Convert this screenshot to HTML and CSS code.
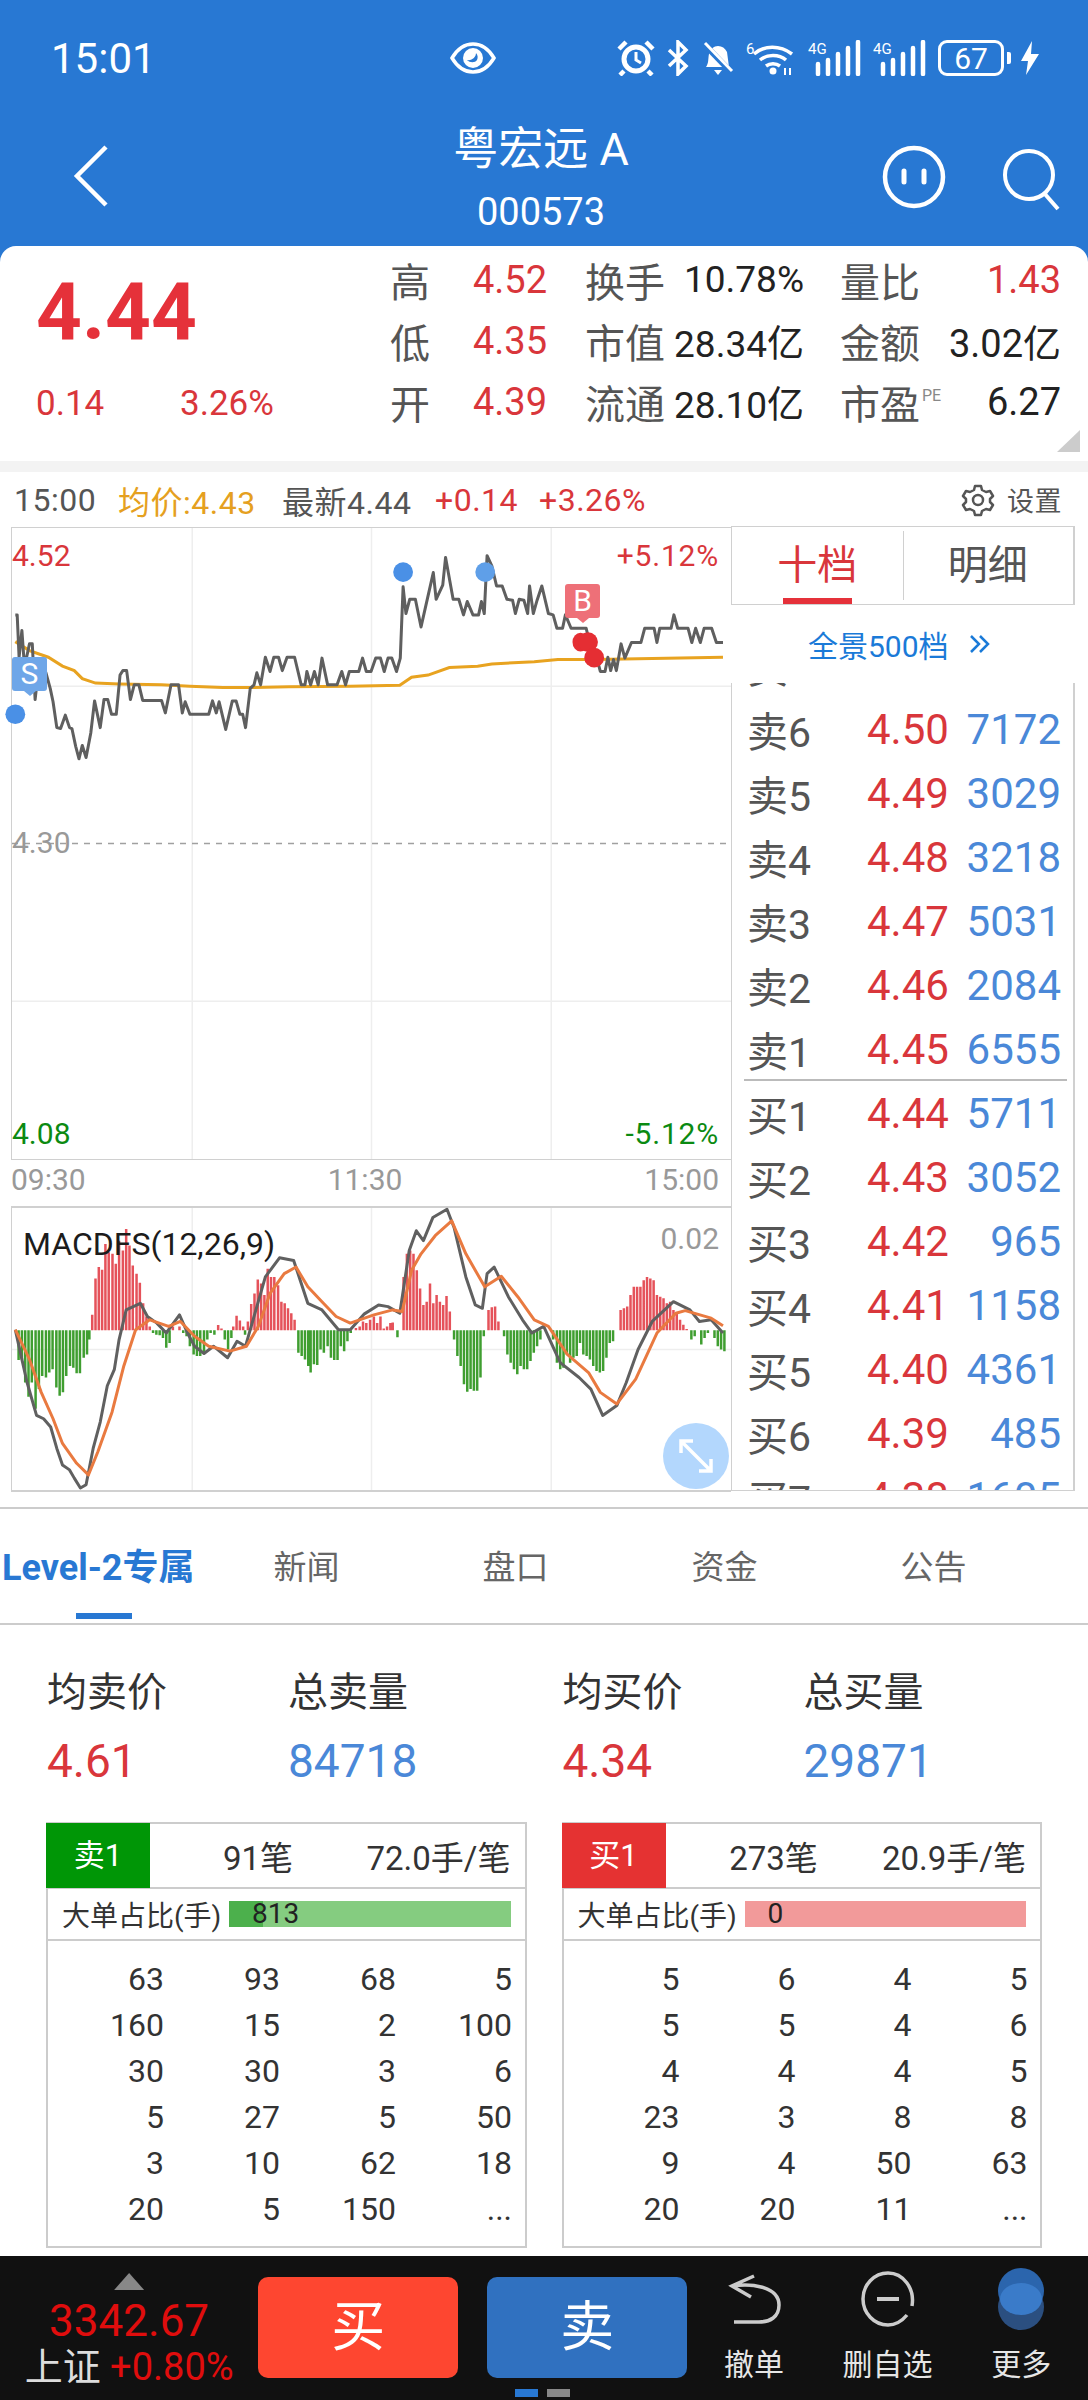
FILE: index.html
```html
<!DOCTYPE html>
<html>
<head>
    <title>粤宏远A</title>
    <link rel="stylesheet" href="styles.css">
</head>
<body>
    <div class="header">
        <div class="status-bar">
            <div class="status-time">15:01</div>
            <svg class="status-eye" width="46" height="32" viewBox="0 0 46 32">
                <path d="M2 16C8 6 15 2 23 2s15 4 21 14c-6 10-13 14-21 14S8 26 2 16z" fill="none" stroke="#fff" stroke-width="3.5"/>
                <circle cx="23" cy="16" r="10" fill="#fff"/>
                <path d="M17 18c3 3 8 3 10 0 1-2 1-5-1-7 0 4-4 8-9 7z" fill="#2878d3"/>
            </svg>
            <div class="status-icons">
                <svg width="38" height="36" viewBox="0 0 38 36">
                    <circle cx="19" cy="19" r="12" fill="none" stroke="#fff" stroke-width="5"/>
                    <path d="M19 12v8l5 3" fill="none" stroke="#fff" stroke-width="3"/>
                    <path d="M2 9l7-7M36 9l-7-7M7 31l-4 4M31 31l4 4" stroke="#fff" stroke-width="4.5"/>
                </svg>
                <svg width="22" height="36" viewBox="0 0 22 36">
                    <path d="M2 10l17 16-8 8V2l8 8L2 26" fill="none" stroke="#fff" stroke-width="3.5"/>
                </svg>
                <svg width="33" height="36" viewBox="0 0 33 36">
                    <path d="M5 27c3-4 2-9 3-13 1-5 5-8 9-8s7 2 9 6l2 15z" fill="#fff"/>
                    <path d="M3 4l27 28" stroke="#2878d3" stroke-width="6"/>
                    <path d="M4 3l27 28" stroke="#fff" stroke-width="3"/>
                    <path d="M13 30h8l-4 5z" fill="#fff"/>
                </svg>
                <svg width="50" height="36" viewBox="0 0 50 36">
                    <text x="0" y="14" class="status-mini">6</text>
                    <path d="M8 14c10-9 26-9 38 0M14 20c7-6 19-6 26 0M20 26c4-3 10-3 14 0" fill="none" stroke="#fff" stroke-width="3.5"/>
                    <circle cx="27" cy="31" r="3.5" fill="#fff"/>
                    <path d="M39 28v7M44 35v-7" stroke="#fff" stroke-width="2"/>
                </svg>
                <svg width="53" height="36" viewBox="0 0 53 36">
                    <text x="0" y="14" class="status-mini">4G</text>
                    <path d="M10 24v10M20 20v14M30 14v20M40 8v26M50 2v32" stroke="#fff" stroke-width="4.5" stroke-linecap="round"/>
                </svg>
                <svg width="53" height="36" viewBox="0 0 53 36">
                    <text x="0" y="14" class="status-mini">4G</text>
                    <path d="M10 24v10M20 20v14M30 14v20M40 8v26M50 2v32" stroke="#fff" stroke-width="4.5" stroke-linecap="round"/>
                </svg>
                <div class="battery">67</div>
                <div class="battery-nub"></div>
                <svg class="status-bolt" width="18" height="34" viewBox="0 0 18 34">
                    <path d="M11 0L0 20h7L5 34l13-21h-8z" fill="#fff"/>
                </svg>
            </div>
        </div>
        <div class="nav">
            <svg class="nav-back" width="40" height="64" viewBox="0 0 40 64">
                <path d="M35 3L6 32l29 29" fill="none" stroke="#fff" stroke-width="4.5"/>
            </svg>
            <div class="nav-title">
                <div class="nav-name">粤宏远 A</div>
                <div class="nav-code">000573</div>
            </div>
            <div class="nav-icons">
                <svg width="66" height="66" viewBox="0 0 66 66">
                    <circle cx="33" cy="33" r="29" fill="none" stroke="#fff" stroke-width="4.5"/>
                    <path d="M23 27v11M43 27v11" stroke="#fff" stroke-width="5" stroke-linecap="round"/>
                </svg>
                <svg class="nav-search" width="62" height="66" viewBox="0 0 62 66">
                    <circle cx="28" cy="28" r="24" fill="none" stroke="#fff" stroke-width="4"/>
                    <path d="M43 46l14 16" stroke="#fff" stroke-width="4"/>
                </svg>
            </div>
        </div>
    </div>

    <div class="quote">
        <div class="quote-main">
            <div class="quote-price">4.44</div>
            <div class="quote-change">
                <span class="quote-delta">0.14</span>
                <span>3.26%</span>
            </div>
        </div>
        <div class="stat-col first">
            <div class="stat-row"><span class="stat-label">高</span><span class="red">4.52</span></div>
            <div class="stat-row"><span class="stat-label">低</span><span class="red">4.35</span></div>
            <div class="stat-row"><span class="stat-label">开</span><span class="red">4.39</span></div>
        </div>
        <div class="stat-col second">
            <div class="stat-row"><span class="stat-label">换手</span><span>10.78%</span></div>
            <div class="stat-row"><span class="stat-label">市值</span><span>28.34亿</span></div>
            <div class="stat-row"><span class="stat-label">流通</span><span>28.10亿</span></div>
        </div>
        <div class="stat-col third">
            <div class="stat-row"><span class="stat-label">量比</span><span class="red">1.43</span></div>
            <div class="stat-row"><span class="stat-label">金额</span><span>3.02亿</span></div>
            <div class="stat-row"><span class="stat-label">市盈<sup class="pe">PE</sup></span><span>6.27</span></div>
        </div>
        <div class="quote-corner"></div>
    </div>

    <div class="trade-area">
        <div class="info-line">
            <span class="info-time">15:00</span>
            <span class="info-avg">均价:4.43</span>
            <span class="info-last">最新4.44</span>
            <span class="red info-delta">+0.14</span>
            <span class="red info-pct">+3.26%</span>
            <span class="info-setting">
                <svg width="34" height="34" viewBox="0 0 34 34">
                    <path d="M14 3h6l1 4 4 2 4-1 3 5-3 3v3l3 3-3 5-4-1-4 2-1 4h-6l-1-4-4-2-4 1-3-5 3-3v-3l-3-3 3-5 4 1 4-2z" fill="none" stroke="#555" stroke-width="2.5" stroke-linejoin="round"/>
                    <circle cx="17" cy="17" r="5" fill="none" stroke="#555" stroke-width="2.5"/>
                </svg>
                设置
            </span>
        </div>
        <div class="trade-body">
            <div class="charts">
                <div class="price-chart">
                    <svg class="chart-svg" viewBox="23 130 1524 1416" preserveAspectRatio="none">
                        <path class="grid-line" d="M405 130V1546M785 130V1546M1166 130V1546M23 485H1547M23 1192H1547"/>
                        <path class="grid-dash" d="M23 838H1547"/>
                        <polyline class="avg-line" points="30,385 60,405 100,420 130,440 155,450 172,468 200,478 250,480 340,482 400,485 470,488 530,488 610,486 740,485 845,483 870,465 905,460 950,443 1010,440 1040,435 1130,430 1180,425 1260,425 1530,420"/>
                        <polyline class="price-line" points="30,325 34,325 38,420 44,360 48,420 54,420 60,390 66,390 72,515 80,440 88,485 95,455 104,490 110,520 118,578 126,580 136,550 145,578 150,580 158,620 165,648 172,618 180,645 190,590 198,518 210,578 218,515 226,515 234,548 244,548 252,460 258,450 266,450 274,515 282,482 292,482 300,517 340,517 348,545 360,482 376,482 384,545 390,520 400,548 440,548 448,518 456,545 462,520 476,582 490,518 498,518 506,548 512,548 518,578 528,490 536,482 542,455 550,482 560,420 570,452 578,420 588,420 596,450 606,420 622,420 636,482 644,482 648,452 656,482 664,452 672,482 680,422 692,482 712,482 722,452 730,482 738,452 758,452 766,422 774,452 784,452 794,422 804,422 812,452 820,422 828,422 838,452 846,422 852,262 858,322 866,290 878,290 890,352 916,230 922,290 936,258 942,196 958,290 970,290 980,325 988,295 1000,325 1012,325 1018,295 1024,322 1030,192 1040,215 1050,260 1062,260 1072,290 1084,292 1090,322 1098,290 1108,292 1116,322 1120,260 1128,322 1136,292 1146,260 1160,322 1170,325 1178,355 1190,355 1196,325 1208,355 1240,355 1248,390 1262,420 1270,452 1280,452 1286,420 1292,450 1298,425 1304,450 1314,390 1322,422 1336,387 1356,387 1364,355 1384,355 1390,387 1396,355 1420,355 1426,325 1434,355 1456,355 1464,387 1472,355 1482,387 1490,355 1506,355 1516,387 1530,387"/>
                        <ellipse class="dot-blue" cx="30" cy="548" rx="21" ry="22"/>
                        <ellipse class="dot-blue" cx="852" cy="229" rx="21" ry="22"/>
                        <ellipse class="dot-blue light" cx="1026" cy="229" rx="21" ry="22"/>
                        <ellipse class="dot-red" cx="1228" cy="386" rx="17" ry="21"/>
                        <ellipse class="dot-red" cx="1244" cy="386" rx="21" ry="22"/>
                        <ellipse class="dot-red" cx="1257" cy="421" rx="21" ry="22"/>
                    </svg>
                    <span class="axis top left red">4.52</span>
                    <span class="axis top right red">+5.12%</span>
                    <span class="axis mid left grey">4.30</span>
                    <span class="axis bottom left green">4.08</span>
                    <span class="axis bottom right green">-5.12%</span>
                    <span class="tag tag-s">S</span>
                    <span class="tag tag-b">B</span>
                </div>
                <div class="time-axis">
                    <span>09:30</span>
                    <span>11:30</span>
                    <span>15:00</span>
                </div>
                <div class="macd-chart">
                    <svg class="chart-svg" viewBox="23 111 1524 855" preserveAspectRatio="none">
                        <path class="grid-line" d="M405 111V966M785 111V966M1166 111V966M23 540H1547"/>
                        <path class="bar-green" d="M37 482V572M44 482V570M51 482V640M58 482V683M65 482V640M73 482V720M80 482V660M87 482V620M95 482V625M102 482V610M109 482V600M117 482V655M124 482V680M131 482V670M138 482V620M146 482V590M153 482V595M160 482V612M167 482V612M175 482V565M182 482V555M187 482V510M322 482V490M329 482V495M336 482V497M343 482V505M350 482V535M357 482V520M386 482V490M393 482V500M400 482V530M408 482V555M415 482V560M422 482V560M430 482V550M437 482V510M444 482V490M452 482V495M474 482V510M481 482V540M488 482V505M517 482V495M630 482V550M637 482V560M644 482V570M651 482V590M656 482V610M663 482V585M670 482V587M677 482V540M684 482V550M692 482V530M699 482V565M706 482V572M713 482V572M720 482V530M727 482V545M734 482V515M741 482V490M840 482V503M960 482V510M967 482V560M974 482V590M981 482V645M988 482V668M995 482V660M1002 482V665M1009 482V665M1016 482V625M1023 482V500M1066 482V500M1073 482V555M1080 482V580M1087 482V600M1094 482V615M1101 482V590M1108 482V600M1115 482V600M1122 482V575M1129 482V550M1136 482V530M1143 482V510M1170 482V510M1178 482V580M1185 482V600M1192 482V595M1199 482V555M1206 482V580M1213 482V565M1220 482V560M1227 482V520M1234 482V555M1241 482V560M1248 482V570M1255 482V590M1262 482V605M1269 482V610M1276 482V605M1283 482V565M1290 482V520M1297 482V515M1463 482V510M1470 482V500M1484 482V525M1491 482V505M1498 482V490M1512 482V505M1519 482V530M1526 482V540M1533 482V545"/>
                        <path class="bar-red" d="M193 482V435M200 482V325M207 482V290M214 482V298M221 482V220M228 482V245M236 482V250M243 482V280M250 482V210M258 482V240M265 482V175M272 482V225M279 482V285M287 482V310M294 482V338M301 482V400M308 482V440M315 482V470M364 482V470M378 482V470M460 482V466M467 482V476M492 482V470M499 482V438M506 482V452M513 482V470M523 482V455M530 482V402M537 482V370M544 482V328M551 482V340M558 482V375M565 482V295M572 482V320M579 482V320M587 482V345M594 482V395M601 482V400M608 482V415M615 482V430M622 482V450M752 482V475M760 482V470M767 482V455M774 482V460M782 482V450M790 482V440M797 482V460M804 482V440M811 482V476M818 482V470M825 482V460M830 482V458M853 482V320M860 482V250M867 482V240M874 482V250M881 482V300M888 482V355M895 482V405M902 482V395M909 482V340M916 482V400M923 482V375M930 482V395M937 482V405M944 482V378M951 482V425M1033 482V420M1040 482V412M1047 482V410M1054 482V455M1313 482V420M1320 482V415M1327 482V410M1334 482V375M1341 482V350M1348 482V350M1355 482V350M1362 482V330M1369 482V320M1376 482V325M1383 482V330M1390 482V375M1397 482V380M1404 482V385M1411 482V400M1418 482V395M1425 482V420M1432 482V430M1439 482V450M1446 482V465M1453 482V478"/>
                        <polyline class="dif-line" points="30,480 40,545 55,640 75,740 90,750 105,775 118,840 130,890 145,905 155,930 168,960 180,950 195,840 210,760 225,650 240,600 250,510 265,420 295,400 310,440 330,460 350,490 378,435 395,490 410,530 430,552 450,530 480,565 500,515 518,530 540,420 560,320 590,262 620,270 650,400 680,420 715,480 740,480 770,432 800,405 820,410 845,430 865,240 880,180 895,210 915,140 945,115 960,170 985,320 1005,405 1020,415 1030,310 1045,290 1075,380 1105,450 1125,490 1150,470 1185,580 1225,625 1250,660 1275,740 1305,710 1325,640 1350,540 1380,455 1425,395 1460,420 1480,455 1505,450 1530,490"/>
                        <polyline class="dea-line" points="30,480 60,570 85,670 110,750 130,825 160,885 185,920 205,850 235,730 260,590 285,480 315,450 355,470 380,455 410,500 440,530 485,545 520,530 545,470 570,370 600,310 625,290 650,350 680,395 710,440 740,460 790,435 830,420 850,425 870,300 890,250 920,195 955,150 985,250 1025,350 1060,318 1095,380 1130,450 1160,470 1200,555 1245,610 1270,670 1305,705 1345,630 1390,490 1430,430 1450,422 1505,445 1530,468"/>
                    </svg>
                    <span class="macd-name">MACDFS(12,26,9)</span>
                    <span class="macd-value">0.02</span>
                    <div class="expand-btn">
                        <svg width="40" height="40" viewBox="0 0 40 40">
                            <path d="M5 17V5h12M5 5l30 30M23 35h12V23" fill="none" stroke="#fff" stroke-width="3.5"/>
                        </svg>
                    </div>
                </div>
            </div>
            <div class="book">
                <div class="book-tabs">
                    <div class="book-tab active">十档</div>
                    <div class="book-tab">明细</div>
                </div>
                <div class="book-link">
                    全景500档
                    <svg width="22" height="20" viewBox="0 0 22 20">
                        <path d="M2 2l8 8-8 8M11 2l8 8-8 8" fill="none" stroke="#1a7ad8" stroke-width="2.5"/>
                    </svg>
                </div>
                <div class="book-list">
                    <div class="book-rows">
                        <div class="book-row"><span class="book-label">卖7</span><span class="book-price">4.51</span><span class="book-vol">2960</span></div>
                        <div class="book-row"><span class="book-label">卖6</span><span class="book-price">4.50</span><span class="book-vol">7172</span></div>
                        <div class="book-row"><span class="book-label">卖5</span><span class="book-price">4.49</span><span class="book-vol">3029</span></div>
                        <div class="book-row"><span class="book-label">卖4</span><span class="book-price">4.48</span><span class="book-vol">3218</span></div>
                        <div class="book-row"><span class="book-label">卖3</span><span class="book-price">4.47</span><span class="book-vol">5031</span></div>
                        <div class="book-row"><span class="book-label">卖2</span><span class="book-price">4.46</span><span class="book-vol">2084</span></div>
                        <div class="book-row book-split"><span class="book-label">卖1</span><span class="book-price">4.45</span><span class="book-vol">6555</span></div>
                        <div class="book-row"><span class="book-label">买1</span><span class="book-price">4.44</span><span class="book-vol">5711</span></div>
                        <div class="book-row"><span class="book-label">买2</span><span class="book-price">4.43</span><span class="book-vol">3052</span></div>
                        <div class="book-row"><span class="book-label">买3</span><span class="book-price">4.42</span><span class="book-vol">965</span></div>
                        <div class="book-row"><span class="book-label">买4</span><span class="book-price">4.41</span><span class="book-vol">1158</span></div>
                        <div class="book-row"><span class="book-label">买5</span><span class="book-price">4.40</span><span class="book-vol">4361</span></div>
                        <div class="book-row"><span class="book-label">买6</span><span class="book-price">4.39</span><span class="book-vol">485</span></div>
                        <div class="book-row"><span class="book-label">买7</span><span class="book-price">4.38</span><span class="book-vol">1605</span></div>
                    </div>
                </div>
            </div>
        </div>
    </div>

    <div class="tabs">
        <div class="tab active">Level-2专属</div>
        <div class="tab">新闻</div>
        <div class="tab">盘口</div>
        <div class="tab">资金</div>
        <div class="tab">公告</div>
    </div>

    <div class="level2">
        <div class="level2-side">
            <div class="totals">
                <div class="total-label">均卖价</div>
                <div class="total-label">总卖量</div>
                <div class="total-value red">4.61</div>
                <div class="total-value blue">84718</div>
            </div>
            <div class="queue">
                <div class="queue-head">
                    <div class="queue-tag sell">卖1</div>
                    <div class="queue-count">91笔</div>
                    <div class="queue-avg">72.0手/笔</div>
                </div>
                <div class="queue-big">
                    <span class="queue-big-label">大单占比(手)</span>
                    <div class="queue-bar sell"><div class="queue-fill sell" style="width: 12%"></div><span class="queue-bar-text">813</span></div>
                </div>
                <div class="queue-grid">
                    <span>63</span><span>93</span><span>68</span><span>5</span>
                    <span>160</span><span>15</span><span>2</span><span>100</span>
                    <span>30</span><span>30</span><span>3</span><span>6</span>
                    <span>5</span><span>27</span><span>5</span><span>50</span>
                    <span>3</span><span>10</span><span>62</span><span>18</span>
                    <span>20</span><span>5</span><span>150</span><span>...</span>
                </div>
            </div>
        </div>
        <div class="level2-side">
            <div class="totals">
                <div class="total-label">均买价</div>
                <div class="total-label">总买量</div>
                <div class="total-value red">4.34</div>
                <div class="total-value blue">29871</div>
            </div>
            <div class="queue">
                <div class="queue-head">
                    <div class="queue-tag buy">买1</div>
                    <div class="queue-count">273笔</div>
                    <div class="queue-avg">20.9手/笔</div>
                </div>
                <div class="queue-big">
                    <span class="queue-big-label">大单占比(手)</span>
                    <div class="queue-bar buy"><span class="queue-bar-text">0</span></div>
                </div>
                <div class="queue-grid">
                    <span>5</span><span>6</span><span>4</span><span>5</span>
                    <span>5</span><span>5</span><span>4</span><span>6</span>
                    <span>4</span><span>4</span><span>4</span><span>5</span>
                    <span>23</span><span>3</span><span>8</span><span>8</span>
                    <span>9</span><span>4</span><span>50</span><span>63</span>
                    <span>20</span><span>20</span><span>11</span><span>...</span>
                </div>
            </div>
        </div>
    </div>

    <div class="bottom-bar">
        <div class="index">
            <div class="index-arrow"></div>
            <div class="index-value">3342.67</div>
            <div class="index-line"><span class="index-name">上证</span> +0.80%</div>
        </div>
        <div class="trade">
            <div class="trade-btns">
                <div class="trade-btn buy">买</div>
                <div class="trade-btn sell">卖</div>
            </div>
            <div class="pager">
                <span class="pager-dot on"></span>
                <span class="pager-dot"></span>
            </div>
        </div>
        <div class="action">
            <svg width="60" height="64" viewBox="0 0 60 64">
                <path d="M30 8L8 18l19 11M8 18c18-3 47 0 47 19 0 12-9 17-20 17H10" fill="none" stroke="#ccc" stroke-width="3.5"/>
            </svg>
            <span>撤单</span>
        </div>
        <div class="action">
            <svg width="60" height="64" viewBox="0 0 60 64">
                <path d="M54 38C57 20 45 5 30 5 16 5 5 17 5 31s11 26 25 26c8 0 14-4 19-10" fill="none" stroke="#ccc" stroke-width="3.5"/>
                <path d="M19 31h22" stroke="#ccc" stroke-width="4"/>
            </svg>
            <span>删自选</span>
        </div>
        <div class="action">
            <svg width="60" height="64" viewBox="0 0 60 64">
                <circle cx="30" cy="39" r="23" fill="#2b4f80"/>
                <circle cx="30" cy="23" r="23" fill="#2b65ad"/>
                <ellipse cx="30" cy="31" rx="21" ry="16" fill="#3a7bc9"/>
            </svg>
            <span>更多</span>
        </div>
    </div>
</body>
</html>
```

FILE: styles.css
```css
* {
    box-sizing: border-box;
}

body {
    margin: 0;
    width: 1088px;
    height: 2400px;
    overflow: hidden;
    background-color: #ffffff;
    font-family: 'Roboto', 'Noto Sans CJK SC', sans-serif;
    color: #222222;
}

.red { color: #d9363b; }
.green { color: #0b8a12; }
.blue { color: #4a88d8; }
.grey { color: #999999; }

/* Header */
.header {
    height: 262px;
    margin-bottom: -16px;
    background-color: #2878d3;
    color: #ffffff;
}

.status-bar {
    display: flex;
    align-items: center;
    height: 116px;
    padding-left: 51px;
    padding-right: 49px;
}

.status-time {
    width: 399px;
    font-size: 42px;
}

.status-icons {
    display: flex;
    align-items: center;
    gap: 12px;
    margin-left: auto;
}

.status-mini {
    fill: #ffffff;
    font-size: 15px;
    font-family: 'Roboto', sans-serif;
}

.status-bolt {
    margin-left: -2px;
}

.battery {
    width: 66px;
    height: 36px;
    border: 3px solid #ffffff;
    border-radius: 9px;
    text-align: center;
    font-size: 30px;
    line-height: 31px;
}

.battery-nub {
    width: 4px;
    height: 12px;
    margin-left: -9px;
    background-color: #ffffff;
    border-radius: 0 2px 2px 0;
}

.nav {
    display: grid;
    grid-template-columns: 434px 214px 1fr;
    height: 130px;
}

.nav-back {
    margin-left: 71px;
    margin-top: 28px;
}

.nav-title {
    text-align: center;
}

.nav-name {
    margin-top: 9px;
    font-size: 45px;
    line-height: 50px;
    white-space: nowrap;
}

.nav-code {
    margin-top: 16px;
    font-size: 38px;
    line-height: 42px;
}

.nav-icons {
    display: flex;
    align-items: flex-start;
    gap: 54px;
    margin-left: 233px;
    margin-top: 28px;
}

.nav-search {
    margin-top: 3px;
}

/* Quote card */
.quote {
    position: relative;
    display: flex;
    height: 226px;
    padding: 3px 0 0 36px;
    background-color: #ffffff;
    border-radius: 16px 16px 0 0;
    border-bottom: 11px solid #f3f3f3;
    font-size: 38px;
}

.quote-main {
    width: 354px;
}

.quote-price {
    margin-top: 18px;
    height: 90px;
    font-size: 80px;
    font-weight: 700;
    line-height: 90px;
    color: #e5313a;
}

.quote-change {
    display: flex;
    margin-top: 25px;
    font-size: 35px;
    line-height: 44px;
    color: #d9363b;
}

.quote-delta {
    width: 144px;
}

.stat-col.first { width: 157px; margin-right: 38px; }
.stat-col.second { width: 219px; margin-right: 36px; font-size: 37px; }
.stat-col.third { width: 221px; }

.stat-row {
    display: flex;
    align-items: center;
    justify-content: space-between;
    height: 61px;
}

.stat-label {
    color: #555555;
    font-size: 40px;
}

.pe {
    font-size: 16px;
    color: #888888;
    vertical-align: 18px;
    line-height: 0;
    margin-left: 2px;
}

.quote-corner {
    position: absolute;
    right: 8px;
    bottom: 9px;
    width: 23px;
    height: 22px;
    background-color: #cccccc;
    clip-path: polygon(100% 0, 100% 100%, 0 100%);
}

/* Trading area */
.trade-area {
    height: 1037px;
    border-bottom: 2px solid #cccccc;
}

.info-line {
    display: flex;
    align-items: center;
    height: 55px;
    padding-left: 14px;
    font-size: 32px;
    letter-spacing: 0.5px;
    white-space: nowrap;
}

.info-time { width: 104px; color: #555555; }
.info-avg { width: 164px; color: #e5a020; }
.info-last { width: 153px; color: #555555; }
.info-delta { width: 104px; }
.info-pct { width: 150px; }

.info-setting {
    display: flex;
    align-items: center;
    gap: 12px;
    margin-left: auto;
    padding-right: 26px;
    font-size: 27px;
    color: #555555;
}

.trade-body {
    display: flex;
    padding-left: 11px;
}

.charts {
    width: 720px;
}

.chart-svg {
    display: block;
    width: 100%;
    height: 100%;
    overflow: visible;
}

.price-chart {
    position: relative;
    height: 633px;
    border: 1px solid #d0d0d0;
    border-right: 0;
}

.macd-chart {
    position: relative;
    height: 286px;
    border-top: 2px solid #d0d0d0;
    border-bottom: 2px solid #d0d0d0;
    border-left: 1px solid #d0d0d0;
}

.grid-line {
    fill: none;
    stroke: #eeeeee;
    stroke-width: 1.5;
    vector-effect: non-scaling-stroke;
}

.grid-dash {
    fill: none;
    stroke: #a0a0a0;
    stroke-width: 1.5;
    stroke-dasharray: 6 6;
    vector-effect: non-scaling-stroke;
}

.price-line {
    fill: none;
    stroke: #5f5f5f;
    stroke-width: 3;
    stroke-linejoin: round;
    vector-effect: non-scaling-stroke;
}

.avg-line {
    fill: none;
    stroke: #e8a320;
    stroke-width: 3;
    vector-effect: non-scaling-stroke;
}

.dot-blue { fill: #4a90e6; }
.dot-blue.light { fill: #5f9fe8; }
.dot-red { fill: #e52e33; }

.axis {
    position: absolute;
    font-size: 30px;
    line-height: 34px;
}

.axis.left { left: 0; }
.axis.right { right: 12px; letter-spacing: 0.8px; }
.axis.top { top: 11px; }
.axis.mid { top: 298px; }
.axis.bottom { bottom: 8px; }

.tag {
    position: absolute;
    display: block;
    width: 35px;
    height: 34px;
    border-radius: 3px;
    text-align: center;
    color: #ffffff;
    font-size: 30px;
    line-height: 34px;
}

.tag::after {
    content: "";
    position: absolute;
    left: 12px;
    bottom: -5px;
    border-left: 6px solid transparent;
    border-right: 6px solid transparent;
    border-top: 5px solid transparent;
}

.tag-s {
    left: 0;
    top: 129px;
    background-color: #6ea6e8;
}

.tag-s::after { border-top-color: #6ea6e8; }

.tag-b {
    left: 553px;
    top: 56px;
    background-color: #ee7078;
}

.tag-b::after { border-top-color: #ee7078; }

.time-axis {
    display: flex;
    justify-content: space-between;
    height: 46px;
    padding-right: 12px;
    font-size: 30px;
    line-height: 40px;
    color: #999999;
}

.bar-green {
    fill: none;
    stroke: #3f9e30;
    stroke-width: 2.5;
    vector-effect: non-scaling-stroke;
}

.bar-red {
    fill: none;
    stroke: #e5525a;
    stroke-width: 2.5;
    vector-effect: non-scaling-stroke;
}

.dif-line {
    fill: none;
    stroke: #606060;
    stroke-width: 3;
    stroke-linejoin: round;
    vector-effect: non-scaling-stroke;
}

.dea-line {
    fill: none;
    stroke: #e97a40;
    stroke-width: 3;
    stroke-linejoin: round;
    vector-effect: non-scaling-stroke;
}

.macd-name {
    position: absolute;
    left: 11px;
    top: 16px;
    font-size: 32px;
    line-height: 40px;
    color: #1c1c1c;
}

.macd-value {
    position: absolute;
    right: 12px;
    top: 14px;
    font-size: 30px;
    line-height: 34px;
    color: #999999;
}

.expand-btn {
    position: absolute;
    right: 2px;
    bottom: 1px;
    display: flex;
    align-items: center;
    justify-content: center;
    width: 66px;
    height: 66px;
    border-radius: 50%;
    background-color: #b3d7fd;
}

/* Order book */
.book {
    width: 344px;
    height: 965px;
    margin-top: -1px;
}

.book-tabs {
    display: flex;
    height: 79px;
    border: 1px solid #d0d0d0;
    border-right-width: 2px;
}

.book-tab {
    position: relative;
    width: 50%;
    padding-top: 16px;
    text-align: center;
    font-size: 40px;
    line-height: 46px;
    color: #555555;
}

.book-tab + .book-tab::before {
    content: "";
    position: absolute;
    left: 0;
    top: 4px;
    bottom: 4px;
    width: 1px;
    background-color: #d0d0d0;
}

.book-tab.active {
    color: #d9363b;
}

.book-tab.active::after {
    content: "";
    position: absolute;
    left: 51px;
    bottom: 0;
    width: 69px;
    height: 6px;
    background-color: #e5313a;
}

.book-link {
    display: flex;
    align-items: center;
    gap: 20px;
    height: 78px;
    padding-left: 77px;
    font-size: 30px;
    color: #1a7ad8;
    white-space: nowrap;
}

.book-list {
    height: 808px;
    overflow: hidden;
    border-left: 1px solid #d0d0d0;
    border-right: 2px solid #d0d0d0;
    border-bottom: 1px solid #d0d0d0;
}

.book-rows {
    margin-top: -50px;
}

.book-row {
    position: relative;
    display: flex;
    align-items: center;
    height: 64px;
    padding: 0 12px 0 15px;
    font-size: 42px;
}

.book-split::after {
    content: "";
    position: absolute;
    left: 12px;
    right: 6px;
    bottom: 0;
    height: 2px;
    background-color: #bbbbbb;
}

.book-label {
    width: 120px;
    font-size: 41px;
    color: #555555;
}

.book-price { color: #d9363b; }
.book-vol { margin-left: auto; color: #4a88d8; }

/* Sub tabs */
.tabs {
    display: grid;
    grid-template-columns: 202px repeat(4, 209px);
    height: 116px;
    border-bottom: 2px solid #cccccc;
    font-size: 33px;
    color: #666666;
}

.tab {
    position: relative;
    padding-top: 36px;
    text-align: center;
    line-height: 46px;
}

.tab.active {
    padding-left: 2px;
    text-align: left;
    font-size: 36px;
    font-weight: 700;
    color: #2878d3;
    white-space: nowrap;
}

.tab.active::after {
    content: "";
    position: absolute;
    left: 76px;
    bottom: 4px;
    width: 56px;
    height: 6px;
    background-color: #2878d3;
}

/* Level-2 panel */
.level2 {
    display: flex;
    gap: 35px;
    height: 631px;
    padding: 44px 46px 0;
}

.level2-side {
    width: 481px;
}

.totals {
    display: grid;
    grid-template-columns: 241px 1fr;
    align-content: start;
    height: 153px;
    padding-left: 1px;
}

.total-label {
    height: 68px;
    font-size: 40px;
    line-height: 48px;
    color: #333333;
}

.total-value {
    font-size: 46px;
    line-height: 48px;
}

.queue {
    height: 426px;
    border: 2px solid #cccccc;
    font-size: 33px;
    color: #333333;
}

.queue-head {
    display: flex;
    align-items: center;
    height: 65px;
    border-bottom: 2px solid #cccccc;
}

.queue-tag {
    width: 104px;
    height: 65px;
    margin: -2px 0 -2px -2px;
    text-align: center;
    line-height: 65px;
    font-size: 31px;
    color: #ffffff;
}

.queue-tag.sell { background-color: #009606; }
.queue-tag.buy { background-color: #e53232; }

.queue-count {
    width: 216px;
    text-align: center;
}

.queue-avg {
    flex: 1;
    padding-right: 14px;
    text-align: right;
}

.queue-big {
    display: flex;
    align-items: center;
    height: 52px;
    padding: 0 14px;
    border-bottom: 2px solid #cccccc;
    font-size: 28px;
}

.queue-big-label {
    width: 167px;
    white-space: nowrap;
}

.queue-bar {
    position: relative;
    flex: 1;
    height: 26px;
    line-height: 26px;
}

.queue-bar.sell { background-color: #85cc80; }
.queue-bar.buy { background-color: #f29a9a; }

.queue-fill.sell {
    height: 100%;
    background-color: #4cb04c;
}

.queue-bar-text {
    position: absolute;
    left: 23px;
    top: 0;
    color: #222222;
}

.queue-grid {
    display: grid;
    grid-template-columns: repeat(4, 116px);
    grid-auto-rows: 46px;
    align-items: center;
    padding-top: 15px;
    font-size: 32px;
    text-align: right;
}

/* Bottom bar */
.bottom-bar {
    display: flex;
    height: 144px;
    background-color: #111111;
    color: #e6e6e6;
}

.index {
    width: 259px;
    padding-top: 17px;
    text-align: center;
    color: #e00d0d;
}

.index-arrow {
    width: 30px;
    height: 17px;
    margin: 0 auto;
    background-color: #888888;
    clip-path: polygon(50% 0, 100% 100%, 0 100%);
}

.index-value {
    margin-top: 6px;
    font-size: 44px;
    line-height: 50px;
}

.index-line {
    margin-top: -3px;
    font-size: 38px;
    line-height: 48px;
    white-space: nowrap;
}

.index-name {
    color: #dddddd;
}

.trade {
    width: 429px;
    padding-top: 21px;
}

.trade-btns {
    display: flex;
    gap: 29px;
}

.trade-btn {
    width: 200px;
    height: 101px;
    border-radius: 10px;
    text-align: center;
    font-size: 54px;
    line-height: 101px;
    color: #ffffff;
}

.trade-btn.buy { background-color: #fe4630; }
.trade-btn.sell { background-color: #3071c0; }

.pager {
    display: flex;
    gap: 9px;
    margin-top: 11px;
    padding-left: 257px;
}

.pager-dot {
    width: 23px;
    height: 8px;
    background-color: #888888;
}

.pager-dot.on {
    background-color: #2878d3;
}

.action {
    display: flex;
    flex-direction: column;
    align-items: center;
    width: 134px;
    padding-top: 12px;
    font-size: 30px;
    line-height: 40px;
}

.action svg {
    margin-bottom: 13px;
}
```
